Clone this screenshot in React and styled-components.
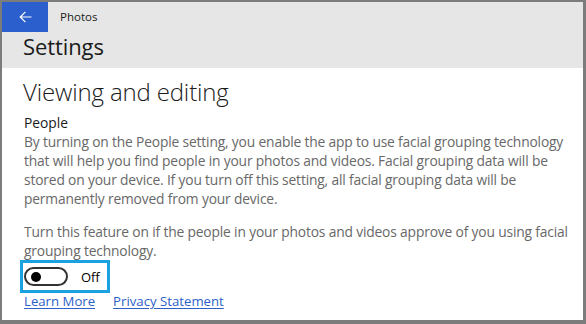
import React from "react";
import styled, { createGlobalStyle } from "styled-components";

const Global = createGlobalStyle`
  html, body { margin: 0; padding: 0; background: #fff; }
  body { font-family: "Open Sans", "Noto Sans", sans-serif; }
  #root { width: 586px; height: 324px; }
`;

const Frame = styled.div`
  box-sizing: border-box;
  width: 586px;
  height: 324px;
  border-style: solid;
  border-color: #7c7c7c;
  border-width: 2px 3px 4px 2px;
  background: #fff;
  display: flex;
  flex-direction: column;
  overflow: hidden;
`;

const Header = styled.header`
  background: #e6e6e6;
  height: 66px;
  display: flex;
  flex-direction: column;
`;

const TitleBar = styled.div`
  display: flex;
  align-items: center;
  height: 30px;
`;

const BackButton = styled.button`
  width: 46px;
  height: 30px;
  border: 0;
  padding: 0;
  background: #2b5fcd;
  display: flex;
  align-items: center;
  justify-content: center;
`;

const AppTitle = styled.span`
  margin-left: 12px;
  font-size: 11.5px;
  color: #1a1a1a;
  line-height: 30px;
`;

const PageTitle = styled.h1`
  margin: 0 0 0 21px;
  font-weight: 400;
  font-size: 22px;
  line-height: 28px;
  color: #1a1a1a;
  letter-spacing: -0.1px;
`;

const Content = styled.main`
  padding: 8px 0 0 22px;
  display: flex;
  flex-direction: column;
`;

const SectionTitle = styled.h2`
  margin: 0 0 0 -1px;
  font-weight: 300;
  font-size: 24px;
  line-height: 32px;
  color: #1a1a1a;
  letter-spacing: -0.15px;
`;

const Label = styled.div`
  margin-top: 5px;
  font-size: 13.8px;
  line-height: 19px;
  color: #1a1a1a;
`;

const Para = styled.p`
  margin: ${(p) => p.$mt || 0}px 0 0;
  font-size: 13.8px;
  line-height: 19px;
  letter-spacing: -0.16px;
  color: #686868;
  width: 550px;
`;

const ToggleBox = styled.div`
  margin: 0 0 0 -4px;
  align-self: flex-start;
  box-sizing: border-box;
  height: 33px;
  border: 3px solid #1ba1e2;
  display: flex;
  align-items: center;
  padding: 0 7px 0 1px;
  gap: 13px;
`;

const Track = styled.div`
  box-sizing: border-box;
  width: 44px;
  height: 19px;
  border: 2px solid #333;
  border-radius: 10px;
  display: flex;
  align-items: center;
  padding-left: 5px;
`;

const Knob = styled.div`
  width: 10px;
  height: 10px;
  border-radius: 50%;
  background: #000;
`;

const ToggleLabel = styled.span`
  font-size: 13px;
  color: #000;
`;

const Links = styled.div`
  display: flex;
  gap: 18px;
  margin-top: 1px;
`;

const Link = styled.a`
  font-size: 13.2px;
  line-height: 15px;
  color: #2d5fc9;
  text-decoration: underline;
  text-underline-offset: 2px;
`;

export default function App() {
  return (
    <>
      <Global />
      <Frame>
        <Header>
          <TitleBar>
            <BackButton aria-label="Back">
              <svg width="13" height="12" viewBox="0 0 13 12" fill="none" stroke="#fff" strokeWidth="1.2">
                <path d="M12.5 6H1.2M6.4 0.8L1.2 6l5.2 5.2" />
              </svg>
            </BackButton>
            <AppTitle>Photos</AppTitle>
          </TitleBar>
          <PageTitle>Settings</PageTitle>
        </Header>
        <Content>
          <SectionTitle>Viewing and editing</SectionTitle>
          <Label>People</Label>
          <Para>
            By turning on the People setting, you enable the app to use facial grouping technology
            that will help you find people in your photos and videos. Facial grouping data will be
            stored on your device. If you turn off this setting, all facial grouping data will be
            permanently removed from your device.
          </Para>
          <Para $mt={14}>
            Turn this feature on if the people in your photos and videos approve of you using facial
            grouping technology.
          </Para>
          <ToggleBox>
            <Track>
              <Knob />
            </Track>
            <ToggleLabel>Off</ToggleLabel>
          </ToggleBox>
          <Links>
            <Link href="#">Learn More</Link>
            <Link href="#">Privacy Statement</Link>
          </Links>
        </Content>
      </Frame>
    </>
  );
}
